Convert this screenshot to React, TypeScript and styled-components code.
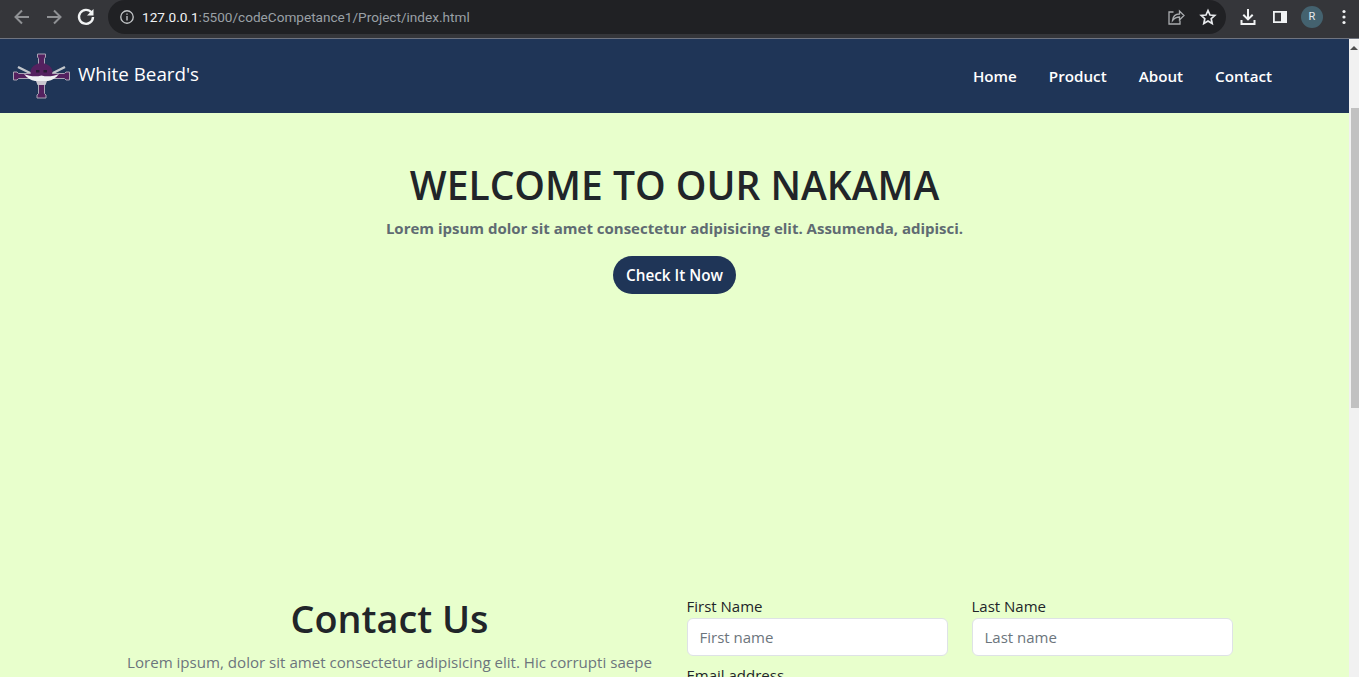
import styled, { createGlobalStyle } from 'styled-components';

const GlobalStyle = createGlobalStyle`
  html, body {
    margin: 0;
    padding: 0;
    height: 100%;
    overflow: hidden;
  }
  body {
    font-family: "Open Sans", "Noto Sans", "Liberation Sans", sans-serif;
    background-color: #e8ffcc;
  }
  * {
    box-sizing: border-box;
  }
`;

const Window = styled.div`
  display: flex;
  flex-direction: column;
  height: 677px;
  overflow: hidden;
`;

const BrowserBar = styled.div`
  flex: none;
  display: flex;
  align-items: center;
  height: 39px;
  padding: 0 0 5px 12px;
  background-color: #35363a;
  border-bottom: 1px solid #6f7480;
`;

const NavIcon = styled.svg<{ dim?: boolean }>`
  flex: none;
  width: 20px;
  height: 20px;
  margin-right: 12px;
  fill: none;
  stroke: ${({ dim }) => (dim ? '#8f9194' : '#f1f3f4')};
  stroke-width: ${({ dim }) => (dim ? 2 : 2.4)};
`;

const AddressBar = styled.div`
  flex: none;
  display: flex;
  align-items: center;
  width: 1118px;
  height: 34px;
  padding: 0 9px 0 11px;
  background-color: #202124;
  border-radius: 17px;
`;

const Url = styled.span`
  flex: 1;
  margin-left: 7px;
  font-family: "Roboto", sans-serif;
  font-size: 13.6px;
  color: #9aa0a6;
  white-space: nowrap;

  & b {
    font-weight: 400;
    color: #f1f3f4;
  }
`;

const InfoIcon = styled.svg`
  flex: none;
  width: 16px;
  height: 16px;
  fill: none;
  stroke: #c4c7c9;
  stroke-width: 1.5;
`;

const ShareIcon = styled.svg`
  flex: none;
  width: 18px;
  height: 18px;
  fill: none;
  stroke: #a9acaf;
  stroke-width: 1.3;
`;

const StarIcon = styled.svg`
  flex: none;
  width: 18px;
  height: 18px;
  margin-left: 14px;
  fill: none;
  stroke: #e8eaed;
  stroke-width: 1.7;
`;

const ToolIcon = styled.svg<{ gap: number }>`
  flex: none;
  width: 18px;
  height: 18px;
  margin-left: ${({ gap }) => gap}px;
  fill: #f1f3f4;
`;

const Avatar = styled.div`
  flex: none;
  display: flex;
  align-items: center;
  justify-content: center;
  width: 22px;
  height: 22px;
  margin-left: 12px;
  border-radius: 50%;
  background-color: #44626f;
  color: #e8eaed;
  font-family: "Roboto", sans-serif;
  font-size: 11px;
`;

const Viewport = styled.div`
  flex: 1;
  display: flex;
  min-height: 0;
`;

const Page = styled.div`
  flex: 1;
  min-width: 0;
  overflow: hidden;
`;

const Scrollbar = styled.div`
  flex: none;
  display: flex;
  flex-direction: column;
  align-items: flex-end;
  width: 10px;
  background-color: #f1f1f1;
`;

const ScrollArrow = styled.div`
  margin: 7px 1px 0 0;
  border-left: 4px solid transparent;
  border-right: 4px solid transparent;
  border-bottom: 4px solid #505050;
`;

const ScrollThumb = styled.div`
  width: 8px;
  height: 300px;
  margin-top: 58px;
  background-color: #c1c1c1;
`;

const Navbar = styled.nav`
  display: flex;
  align-items: center;
  height: 74px;
  padding: 0 77px 0 13px;
  background-color: #1f3557;
`;

const Brand = styled.a`
  display: flex;
  align-items: center;
  gap: 7px;
  font-size: 18.8px;
  line-height: 24px;
  color: #ffffff;

  & span {
    margin-top: -4px;
  }
`;

const NavLinks = styled.div`
  display: flex;
  gap: 32px;
  margin-left: auto;
`;

const NavLink = styled.a`
  font-size: 15.2px;
  font-weight: 600;
  color: #ffffff;
`;

const Hero = styled.section`
  display: flex;
  flex-direction: column;
  align-items: center;
  height: 481px;
  padding-top: 48px;
`;

const HeroTitle = styled.h1`
  margin: 0;
  font-size: 39px;
  line-height: 48px;
  font-weight: 600;
  color: #212529;
`;

const Lead = styled.p`
  margin: 7px 0 0;
  font-size: 15px;
  line-height: 24px;
  font-weight: 700;
  color: #5f6b72;
`;

const PillButton = styled.button`
  margin-top: 16px;
  width: 123px;
  height: 38px;
  padding: 0;
  border: none;
  border-radius: 19px;
  background-color: #1f3557;
  color: #ffffff;
  font-family: inherit;
  font-size: 15.3px;
  font-weight: 600;
`;

const Contact = styled.section`
  display: grid;
  grid-template-columns: 1fr 1fr;
  width: 1140px;
  margin: 0 auto;
`;

const ContactText = styled.div`
  padding: 1px 12px 0;
  text-align: center;
`;

const ContactTitle = styled.h2`
  margin: 0;
  font-size: 37.8px;
  line-height: 48px;
  font-weight: 600;
  color: #212529;
`;

const ContactBlurb = styled.p`
  margin: 7px 0 0;
  font-size: 15.1px;
  line-height: 24px;
  color: #6c757d;
`;

const Form = styled.form`
  display: grid;
  grid-template-columns: 1fr 1fr;
  gap: 0 24px;
  padding: 0 12px;
`;

const Field = styled.div<{ wide?: boolean }>`
  display: flex;
  flex-direction: column;
  grid-column: ${({ wide }) => (wide ? 'span 2' : 'auto')};
  margin-bottom: 7px;
`;

const Label = styled.label`
  font-size: 15px;
  line-height: 24px;
  color: #212529;
`;

const Input = styled.input`
  height: 38px;
  padding: 6px 12px;
  border: 1px solid #dee2e6;
  border-radius: 6px;
  background-color: #ffffff;
  font-family: inherit;
  font-size: 15px;

  &::placeholder {
    color: #6c757d;
  }
`;

function Logo() {
  return (
    <svg width="58" height="46" viewBox="0 0 58 46">
      <path d="M5 14 18 20.500M52 14 39 20.500" stroke="#c3c7cc" strokeWidth="2.500" />
      <g fill="#54215f" stroke="#a9a4b4" strokeWidth="1">
        <path d="M24.500 1h8v3L31.500 5.500V12h-6V5.500L24.500 4z" />
        <path d="M25.500 30h6v10.500l1.500 1.500v3h-9v-3l1.500-1.500z" />
        <path d="M.5 19h3.500l1.500 1.500h46L53 19h3.500v8H53l-1.500-1.500h-46L4 27H.5z" />
      </g>
      <ellipse cx="28.500" cy="19" rx="11" ry="9" fill="#54215f" />
      <path d="M11 21c6 2.500 12 3 17.500 1.500C34 24 40 23.500 46 21c-3 4-7 6.500-11 7H22c-4-.5-8-3-11-7z" fill="#eef0f2" />
      <path d="M23 17h3.500v2.500H23zM30.500 17H34v2.500h-3.500z" fill="#261a33" />
      <path d="M23 28h11l-1.500 4h-8z" fill="#c9c6cf" />
    </svg>
  );
}

export default function App() {
  return (
    <>
      <GlobalStyle />
      <Window>
        <BrowserBar>
          <NavIcon dim viewBox="0 0 20 20">
            <path d="M17 10H4M10 3.500 3.500 10l6.500 6.500" />
          </NavIcon>
          <NavIcon dim viewBox="0 0 20 20">
            <path d="M3 10h13M10 3.500 16.500 10 10 16.500" />
          </NavIcon>
          <NavIcon viewBox="0 0 20 20">
            <path d="M15.500 5.500A7 7 0 1 0 17 10" />
            <path d="M17.500 2v6.500H11z" fill="#f1f3f4" stroke="none" />
          </NavIcon>
          <AddressBar>
            <InfoIcon viewBox="0 0 18 18">
              <circle cx="9" cy="9" r="7" />
              <path d="M9 8v5M9 5v1.500" />
            </InfoIcon>
            <Url>
              <b>127.0.0.1</b>:5500/codeCompetance1/Project/index.html
            </Url>
            <ShareIcon viewBox="0 0 18 18">
              <path d="M6.500 4H2v12h11v-3.500" />
              <path d="M5.500 12.500c.5-4.500 3-6.500 7-6.500V3l4.500 4.500-4.500 4.500V9c-3 0-5 1-7 3.500z" />
            </ShareIcon>
            <StarIcon viewBox="0 0 18 18">
              <path d="m9 2.500 2 4.500 4.800.5-3.600 3.200 1 4.800L9 13l-4.200 2.500 1-4.800-3.600-3.200L7 7z" />
            </StarIcon>
          </AddressBar>
          <ToolIcon gap={13} viewBox="0 0 18 18">
            <path d="M8 1h2v8l3-3 1.400 1.400L9 12.800 3.600 7.400 5 6l3 3zM1.500 12h2v3h11v-3h2v5h-15z" />
          </ToolIcon>
          <ToolIcon gap={14} viewBox="0 0 18 18">
            <path d="M2 3h14v12H2zm1.800 1.800v8.400H10V4.800z" fillRule="evenodd" />
          </ToolIcon>
          <Avatar>R</Avatar>
          <ToolIcon gap={12} viewBox="0 0 18 18">
            <circle cx="9" cy="3.500" r="1.600" />
            <circle cx="9" cy="9" r="1.600" />
            <circle cx="9" cy="14.500" r="1.600" />
          </ToolIcon>
        </BrowserBar>
        <Viewport>
          <Page>
            <Navbar>
              <Brand>
                <Logo />
                <span>White Beard's</span>
              </Brand>
              <NavLinks>
                <NavLink>Home</NavLink>
                <NavLink>Product</NavLink>
                <NavLink>About</NavLink>
                <NavLink>Contact</NavLink>
              </NavLinks>
            </Navbar>
            <Hero>
              <HeroTitle>WELCOME TO OUR NAKAMA</HeroTitle>
              <Lead>Lorem ipsum dolor sit amet consectetur adipisicing elit. Assumenda, adipisci.</Lead>
              <PillButton type="button">Check It Now</PillButton>
            </Hero>
            <Contact>
              <ContactText>
                <ContactTitle>Contact Us</ContactTitle>
                <ContactBlurb>
                  Lorem ipsum, dolor sit amet consectetur adipisicing elit. Hic corrupti saepe
                </ContactBlurb>
              </ContactText>
              <Form>
                <Field>
                  <Label>First Name</Label>
                  <Input placeholder="First name" />
                </Field>
                <Field>
                  <Label>Last Name</Label>
                  <Input placeholder="Last name" />
                </Field>
                <Field wide>
                  <Label>Email address</Label>
                  <Input placeholder="name@example.com" />
                </Field>
              </Form>
            </Contact>
          </Page>
          <Scrollbar>
            <ScrollArrow />
            <ScrollThumb />
          </Scrollbar>
        </Viewport>
      </Window>
    </>
  );
}
